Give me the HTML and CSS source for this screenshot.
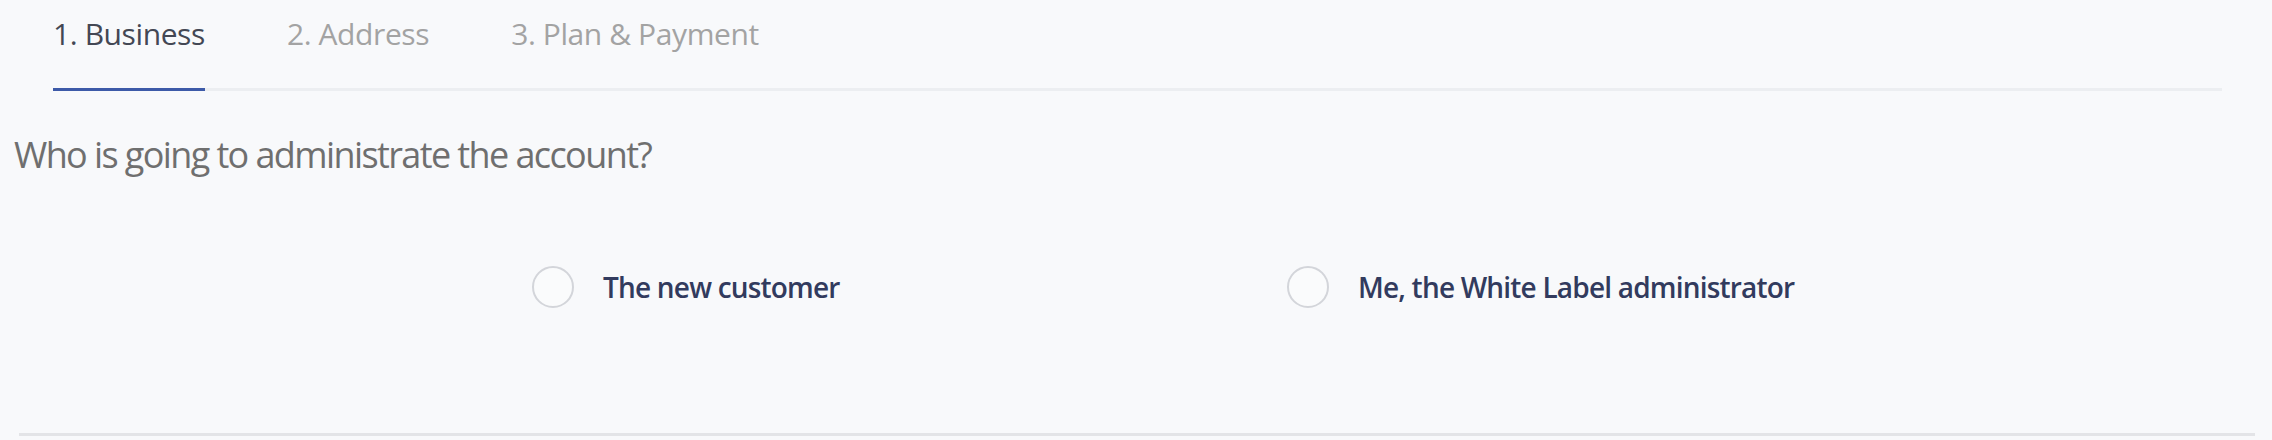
FILE: index.html
```html
<!DOCTYPE html>
<html>
<head>
<meta charset="UTF-8">
<title>New customer</title>
<link rel="stylesheet" href="styles.css">
</head>
<body>
<div class="wizard">
	<div class="tabs">
		<a class="tab selected" href="#business">1. Business</a>
		<a class="tab" href="#address">2. Address</a>
		<a class="tab" href="#plan">3. Plan &amp; Payment</a>
	</div>

	<h2 class="question">Who is going to administrate the account?</h2>

	<form class="options" action="">
		<label class="option"><input type="radio" name="admin" value="customer"><span class="dot"></span>The new customer</label>
		<label class="option"><input type="radio" name="admin" value="me"><span class="dot"></span>Me, the White Label administrator</label>
	</form>

	<div class="rule"></div>
</div>
</body>
</html>
```

FILE: styles.css
```css
html {

	font-family: "Open Sans", "Liberation Sans", sans-serif;
	color: #333;
}
body {

	margin: 0;
	background: #f8f9fb;
}
a {

	text-decoration: none;
}
.wizard {

	width: 2272px;
	height: 440px;
	overflow: hidden;
}
.tabs {

	display: flex;
	gap: 82px;
	margin: 0 50px 0 53px;
	padding-top: 14px;
	border-bottom: 3px solid #eceef1;
}
.tab {

	font-size: 30px;
	line-height: 40px;
	letter-spacing: -0.4px;
	padding-bottom: 34px;
	margin-bottom: -3px;
	border-bottom: 3px solid transparent;
	color: #a3a3a3;
}
.tab.selected {

	color: #434754;
	border-bottom-color: #3d5aa8;
}
.question {

	margin: 40px 0 0 14px;
	font-size: 36px;
	line-height: 48px;
	font-weight: 400;
	letter-spacing: -1.6px;
	color: #6f6f6f;
}
.options {

	display: grid;
	grid-template-columns: 755px 755px;
	margin: 87px 0 0 532px;
}
.option {

	display: flex;
	align-items: center;
	gap: 29px;
	font-size: 28px;
	font-weight: 600;
	letter-spacing: -0.8px;
	color: #323b5e;
	cursor: pointer;
}
.option input {

	display: none;
}
.dot {

	width: 38px;
	height: 38px;
	border: 2px solid #d3d5da;
	border-radius: 50%;
	background: #fafbfc;
}
.rule {

	height: 3px;
	margin: 125px 17px 0 19px;
	background: #e3e4e7;
}
```
